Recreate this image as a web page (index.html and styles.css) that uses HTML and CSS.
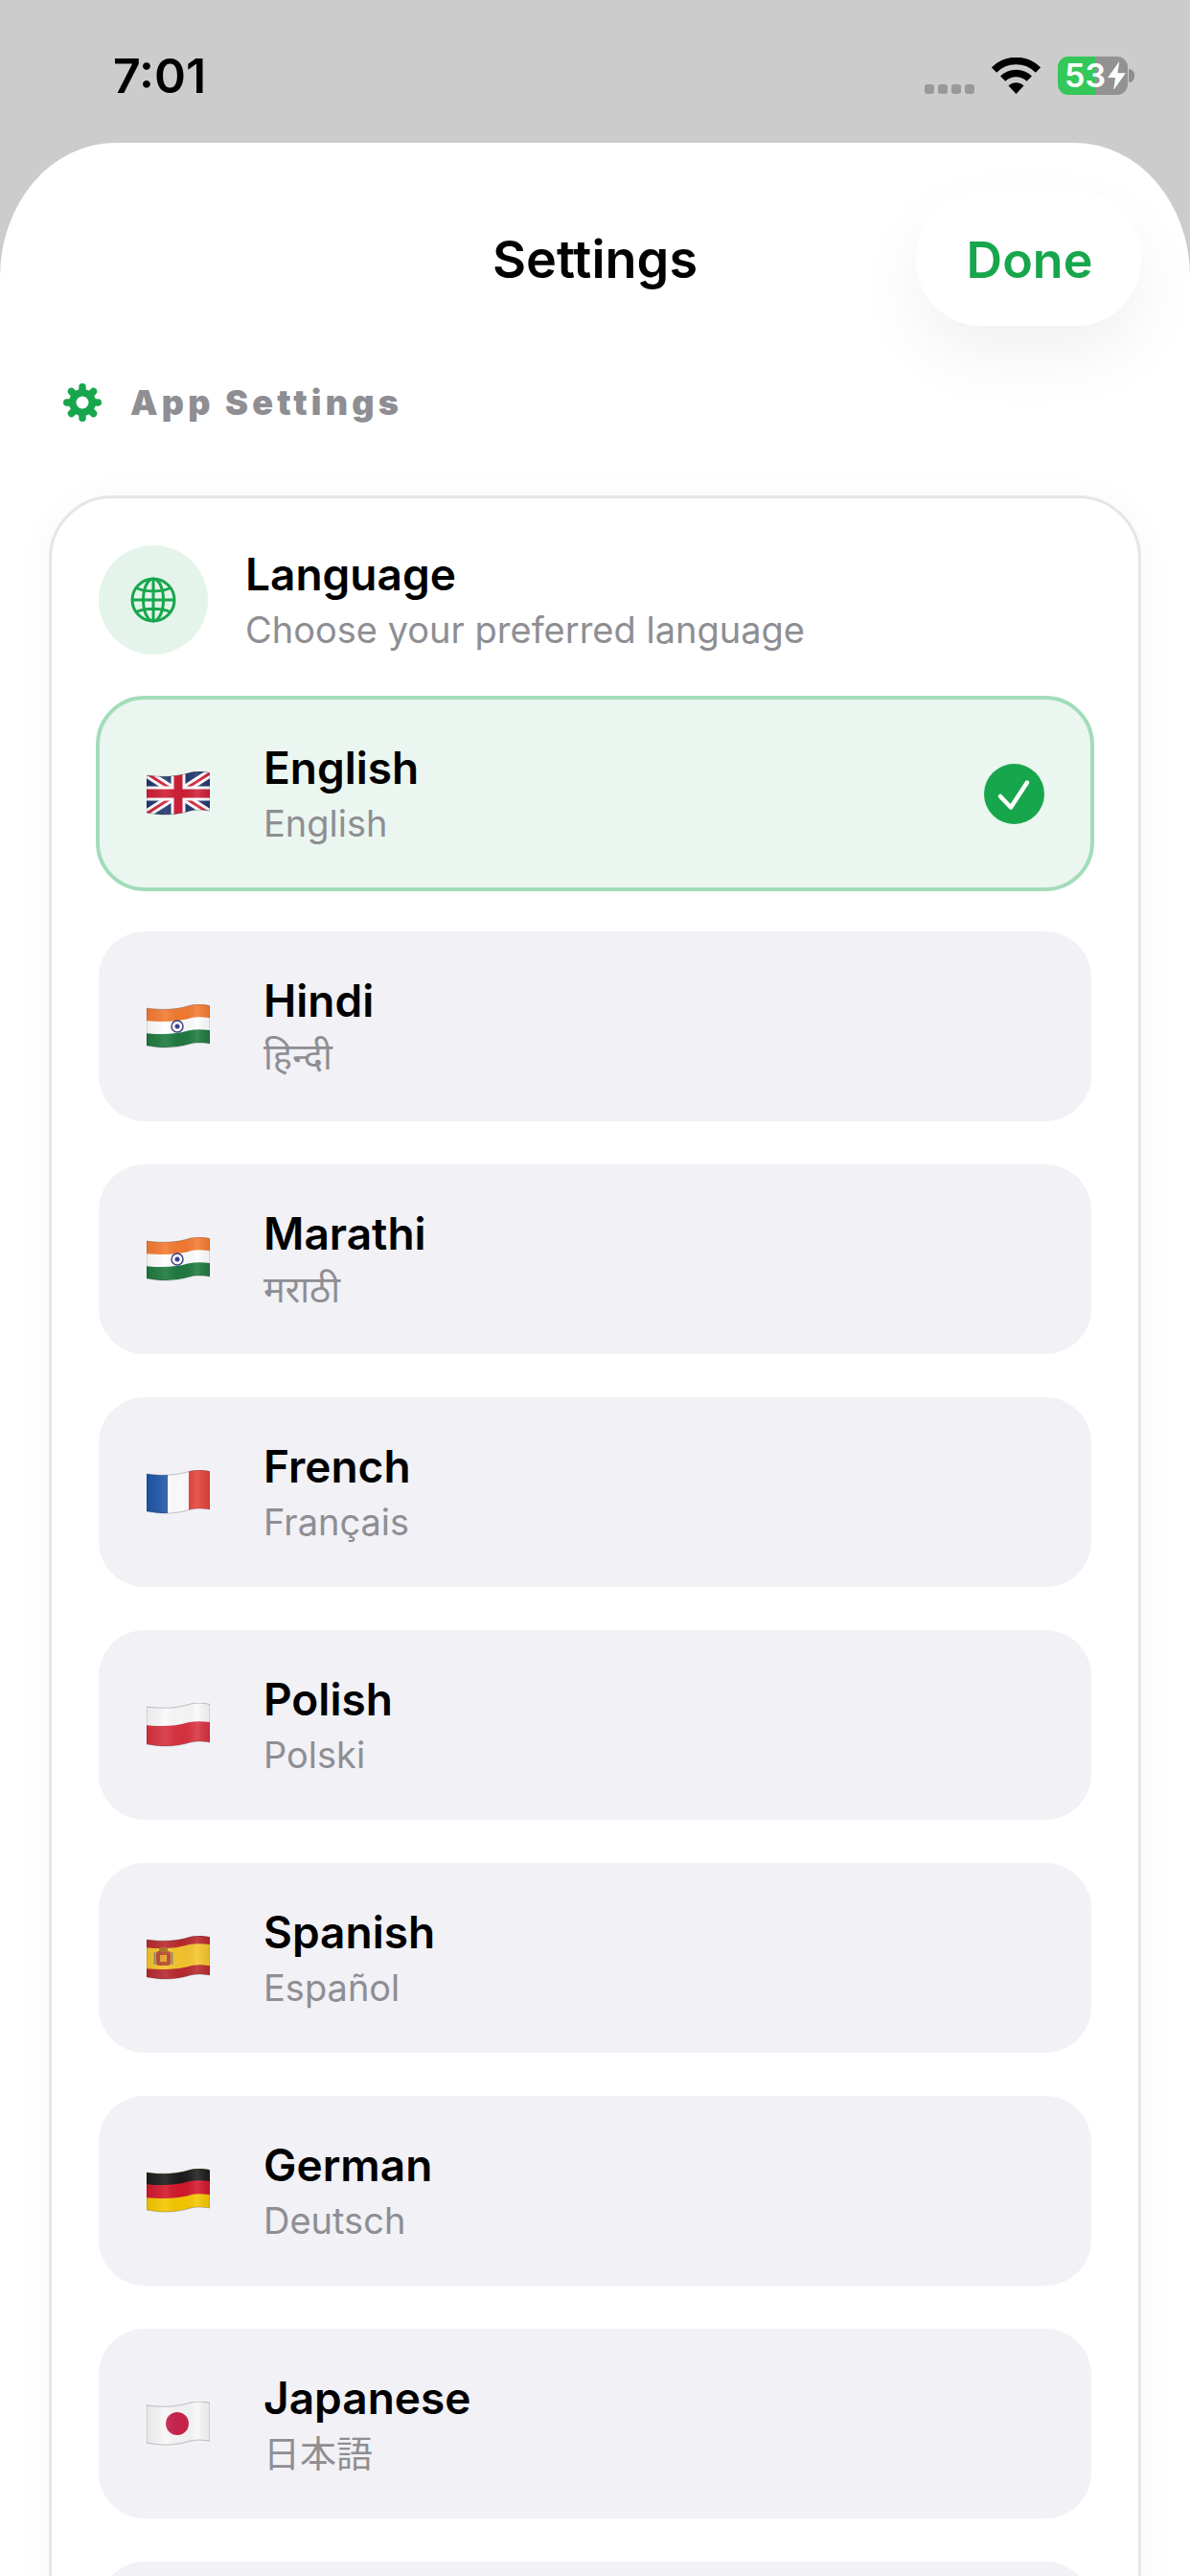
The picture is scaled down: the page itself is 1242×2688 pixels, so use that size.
FILE: index.html
```html
<!DOCTYPE html>
<html>
	<head>
		<meta charset="UTF-8">
		<title>Settings</title>
		<link rel="stylesheet" href="styles.css">
	</head>
	<body>
		<svg class="defs" width="0" height="0">
			<defs>
				<path id="flag-edge" d="M0 4C16 6 30 6 46 1C53 -.5 60 0 66 1.500L66 41C58 40 52 39.500 46 41C30 46 16 46 0 43Z" fill="none" stroke="#000" stroke-opacity=".22" stroke-width="1"/>
				<clipPath id="flag-shape">
					<path d="M0 4C16 6 30 6 46 1C53 -.5 60 0 66 1.500L66 41C58 40 52 39.500 46 41C30 46 16 46 0 43Z"/>
				</clipPath>
				<path id="wave" d="M-2 0C16 2 30 2 46 -3C53 -4.500 60 -4 68 -2.500" fill="none"/>
				<linearGradient id="shade" x1="0" x2="1" y1="0" y2="0">
					<stop offset="0" stop-color="#000" stop-opacity=".06"/>
					<stop offset=".3" stop-color="#fff" stop-opacity=".1"/>
					<stop offset=".55" stop-color="#000" stop-opacity=".02"/>
					<stop offset=".8" stop-color="#fff" stop-opacity=".12"/>
					<stop offset="1" stop-color="#000" stop-opacity=".06"/>
				</linearGradient>
			</defs>
		</svg>

		<div class="status-bar">
			<div class="time">7:01</div>
			<div class="status-icons">
				<div class="signal"><i></i><i></i><i></i><i></i></div>
				<svg class="wifi" viewBox="0 0 51 38">
					<path d="M2.500 13A32.500 32.500 0 0 1 48.500 13" fill="none" stroke="#000" stroke-width="7.500"/>
					<path d="M11.700 22.200A19.500 19.500 0 0 1 39.300 22.200" fill="none" stroke="#000" stroke-width="7.500"/>
					<path d="M25.500 38L17.500 29.500A11.500 11.500 0 0 1 33.500 29.500Z" fill="#000"/>
				</svg>
				<div class="battery-wrap">
					<div class="battery">
						<span>53</span>
						<svg class="bolt" viewBox="0 0 22 32"><path d="M14 0L1 18H9.500L7.500 32L21 13H12Z" fill="#fff"/></svg>
					</div>
					<div class="battery-nub"></div>
				</div>
			</div>
		</div>

		<div class="sheet">
			<div class="sheet-header">
				<div class="sheet-title">Settings</div>
				<div class="done-btn">Done</div>
			</div>

			<div class="section-label">
				<svg class="gear" viewBox="0 0 40 40">
					<circle cx="20" cy="20" r="14" fill="#17a64c"/>
					<g stroke="#17a64c" stroke-width="7.500" stroke-linecap="round">
						<path d="M20 3.800V36.200M3.800 20H36.200M8.500 8.500L31.500 31.500M31.500 8.500L8.500 31.500"/>
					</g>
					<circle cx="20" cy="20" r="6.500" fill="#fff"/>
				</svg>
				<span>App Settings</span>
			</div>

			<div class="card">
				<div class="card-head">
					<div class="head-icon">
						<svg class="globe" viewBox="0 0 48 48" fill="none" stroke="#17a64c" stroke-width="3">
							<circle cx="24" cy="24" r="22"/>
							<ellipse cx="24" cy="24" rx="10.500" ry="22"/>
							<path d="M24 2V46M2 24H46M6 11.500C16 16 32 16 42 11.500M6 36.500C16 32 32 32 42 36.500"/>
						</svg>
					</div>
					<div class="text-block">
						<div class="head-title">Language</div>
						<div class="head-sub">Choose your preferred language</div>
					</div>
				</div>

				<div class="lang-list">
					<div class="lang-row selected">
						<svg class="flag" viewBox="0 0 66 46">
							<g clip-path="url(#flag-shape)">
								<rect width="66" height="46" fill="#23386f"/>
								<path d="M0 2L66 44M66 2L0 44" stroke="#fff" stroke-width="9"/>
								<path d="M0 2L66 44M66 2L0 44" stroke="#d0213a" stroke-width="3"/>
								<path d="M33 0V46M0 23H66" stroke="#fff" stroke-width="15"/>
								<path d="M33 0V46M0 23H66" stroke="#cf1f36" stroke-width="9"/>
								<rect width="66" height="46" fill="url(#shade)"/>
							</g>
							<use href="#flag-edge"/>
						</svg>
						<div class="text-block">
							<div class="lang-name">English</div>
							<div class="lang-sub">English</div>
						</div>
						<svg class="check" viewBox="0 0 63 63">
							<circle cx="31.500" cy="31.500" r="31.500" fill="#17a64c"/>
							<path d="M17 34L28 45.500L45 19.500" fill="none" stroke="#fff" stroke-width="4.500" stroke-linecap="round" stroke-linejoin="round"/>
						</svg>
					</div>

					<div class="lang-row">
						<svg class="flag" viewBox="0 0 66 46">
							<g clip-path="url(#flag-shape)">
								<rect width="66" height="46" fill="#fff"/>
								<use href="#wave" y="10" stroke="#f47b32" stroke-width="14"/>
								<use href="#wave" y="37" stroke="#1f7a3f" stroke-width="14"/>
								<circle cx="32" cy="23" r="6" fill="#fff" stroke="#3c3f8f" stroke-width="1.500"/>
								<circle cx="32" cy="23" r="2.500" fill="#3c3f8f"/>
								<rect width="66" height="46" fill="url(#shade)"/>
							</g>
							<use href="#flag-edge"/>
						</svg>
						<div class="text-block">
							<div class="lang-name">Hindi</div>
							<div class="lang-sub">हिन्दी</div>
						</div>
					</div>

					<div class="lang-row">
						<svg class="flag" viewBox="0 0 66 46">
							<g clip-path="url(#flag-shape)">
								<rect width="66" height="46" fill="#fff"/>
								<use href="#wave" y="10" stroke="#f47b32" stroke-width="14"/>
								<use href="#wave" y="37" stroke="#1f7a3f" stroke-width="14"/>
								<circle cx="32" cy="23" r="6" fill="#fff" stroke="#3c3f8f" stroke-width="1.500"/>
								<circle cx="32" cy="23" r="2.500" fill="#3c3f8f"/>
								<rect width="66" height="46" fill="url(#shade)"/>
							</g>
							<use href="#flag-edge"/>
						</svg>
						<div class="text-block">
							<div class="lang-name">Marathi</div>
							<div class="lang-sub">मराठी</div>
						</div>
					</div>

					<div class="lang-row">
						<svg class="flag" viewBox="0 0 66 46">
							<g clip-path="url(#flag-shape)">
								<rect width="66" height="46" fill="#fff"/>
								<rect width="22" height="46" fill="#1f57a8"/>
								<rect x="44" width="22" height="46" fill="#e5423b"/>
								<rect width="66" height="46" fill="url(#shade)"/>
							</g>
							<use href="#flag-edge"/>
						</svg>
						<div class="text-block">
							<div class="lang-name">French</div>
							<div class="lang-sub">Français</div>
						</div>
					</div>

					<div class="lang-row">
						<svg class="flag" viewBox="0 0 66 46">
							<g clip-path="url(#flag-shape)">
								<rect width="66" height="46" fill="#fafafa"/>
								<use href="#wave" y="34" stroke="#d8323f" stroke-width="22"/>
								<rect width="66" height="46" fill="url(#shade)"/>
							</g>
							<use href="#flag-edge"/>
						</svg>
						<div class="text-block">
							<div class="lang-name">Polish</div>
							<div class="lang-sub">Polski</div>
						</div>
					</div>

					<div class="lang-row">
						<svg class="flag" viewBox="0 0 66 46">
							<g clip-path="url(#flag-shape)">
								<rect width="66" height="46" fill="#b92a2f"/>
								<use href="#wave" y="23" stroke="#f5c52c" stroke-width="22"/>
								<rect x="10" y="16" width="15" height="15" rx="3" fill="#b5472a"/>
								<rect x="13" y="12" width="9" height="5" rx="2" fill="#a8651f"/>
								<rect x="14" y="20" width="7" height="7" fill="#e3a22c"/>
								<rect x="7.500" y="17" width="2" height="13" fill="#8f8a7a"/>
								<rect x="25.500" y="17" width="2" height="13" fill="#8f8a7a"/>
								<rect width="66" height="46" fill="url(#shade)"/>
							</g>
							<use href="#flag-edge"/>
						</svg>
						<div class="text-block">
							<div class="lang-name">Spanish</div>
							<div class="lang-sub">Español</div>
						</div>
					</div>

					<div class="lang-row">
						<svg class="flag" viewBox="0 0 66 46">
							<g clip-path="url(#flag-shape)">
								<rect width="66" height="46" fill="#f6c700"/>
								<use href="#wave" y="9" stroke="#1d1d1d" stroke-width="15"/>
								<use href="#wave" y="23" stroke="#d3182c" stroke-width="14"/>
								<rect width="66" height="46" fill="url(#shade)"/>
							</g>
							<use href="#flag-edge"/>
						</svg>
						<div class="text-block">
							<div class="lang-name">German</div>
							<div class="lang-sub">Deutsch</div>
						</div>
					</div>

					<div class="lang-row">
						<svg class="flag" viewBox="0 0 66 46">
							<g clip-path="url(#flag-shape)">
								<rect width="66" height="46" fill="#f8f8f8"/>
								<circle cx="32" cy="23" r="12" fill="#c9224c"/>
								<rect width="66" height="46" fill="url(#shade)"/>
							</g>
							<use href="#flag-edge"/>
						</svg>
						<div class="text-block">
							<div class="lang-name">Japanese</div>
							<div class="lang-sub">日本語</div>
						</div>
					</div>

					<div class="lang-row"></div>
				</div>
			</div>
		</div>
	</body>
</html>
```
FILE: styles.css
```css
* {
	box-sizing: border-box;
}
html, body {
	margin: 0;
	height: 2688px;
	overflow: hidden;
}
body {
	background: #ccc;
	color: #000;
	font-family: Inter, "Noto Sans", "Noto Sans CJK JP", sans-serif;
}
.defs {
	display: block;
	height: 0;
}

/* status bar */
.status-bar {
	height: 149px;
	padding: 8px 58px 0 118px;
	display: flex;
	align-items: center;
	justify-content: space-between;
}
.time {
	font-size: 50px;
	font-weight: 600;
}
.status-icons {
	display: flex;
	align-items: center;
	gap: 18px;
}
.signal {
	display: flex;
	gap: 4px;
	margin-top: 28px;
}
.signal i {
	width: 10px;
	height: 10px;
	border-radius: 3px;
	background: #999;
}
.wifi {
	width: 51px;
	height: 38px;
}
.battery-wrap {
	display: flex;
	align-items: center;
	gap: 1px;
}
.battery {
	width: 73px;
	height: 40px;
	border-radius: 11px;
	background: linear-gradient(90deg, #34c759 53%, #929292 53%);
	display: flex;
	align-items: center;
	padding-left: 7px;
	color: #fff;
	font-size: 34px;
	font-weight: 600;
}
.bolt {
	width: 21px;
	height: 30px;
	margin-left: 1px;
}
.battery-nub {
	width: 6px;
	height: 14px;
	border-radius: 0 6px 6px 0;
	background: #8e8e8e;
}

/* sheet */
.sheet {
	height: 2539px;
	background: #fff;
	border-radius: 120px 120px 0 0 / 140px 140px 0 0;
	padding-top: 51px;
	overflow: hidden;
}
.sheet-header {
	display: grid;
	grid-template-columns: 1fr auto 1fr;
	align-items: center;
	padding: 0 51px;
}
.sheet-title {
	grid-column: 2;
	font-size: 54px;
	font-weight: 600;
}
.done-btn {
	justify-self: end;
	width: 235px;
	height: 140px;
	border-radius: 68px;
	background: #fff;
	box-shadow: 0 30px 70px rgba(0, 0, 0, .06);
	display: flex;
	align-items: center;
	justify-content: center;
	padding: 2px 0 0 2px;
	color: #17a64c;
	font-size: 52px;
	font-weight: 600;
}
.section-label {
	display: flex;
	align-items: center;
	gap: 30px;
	margin-top: 60px;
	padding-left: 66px;
	height: 40px;
	color: #8e8e93;
	font-size: 36px;
	font-weight: 900;
	letter-spacing: 4.200px;
}
.gear {
	width: 40px;
	height: 40px;
}

/* language card */
.card {
	margin: 77px 51px 0;
	padding: 49px 49px 0;
	height: 2300px;
	background: #fff;
	border: 3px solid #e5e5ea;
	border-radius: 66px;
	box-shadow: 0 4px 40px rgba(0, 0, 0, .035);
}
.card-head {
	display: flex;
	align-items: center;
	gap: 39px;
	height: 114px;
}
.head-icon {
	width: 114px;
	height: 114px;
	border-radius: 50%;
	background: #e4f4eb;
	display: flex;
	align-items: center;
	justify-content: center;
}
.globe {
	width: 48px;
	height: 48px;
}
.text-block {
	padding-top: 3px;
}
.head-title, .lang-name {
	font-size: 46px;
	font-weight: 600;
	line-height: 56px;
}
.head-sub, .lang-sub {
	margin-top: 3px;
	font-size: 38px;
	line-height: 54px;
	color: #8e8e93;
}
.lang-list {
	display: flex;
	flex-direction: column;
	gap: 45px;
	margin-top: 46px;
}
.lang-row {
	flex: none;
	height: 198px;
	padding: 0 49px 0 50px;
	border-radius: 48px;
	background: #f1f1f6;
	display: flex;
	align-items: center;
	gap: 56px;
}
.lang-row.selected {
	background: #ebf6f0;
	outline: 4px solid #a2dcb9;
	outline-offset: -1px;
}
.flag {
	width: 66px;
	height: 46px;
}
.check {
	width: 63px;
	height: 63px;
	margin-left: auto;
}
```
